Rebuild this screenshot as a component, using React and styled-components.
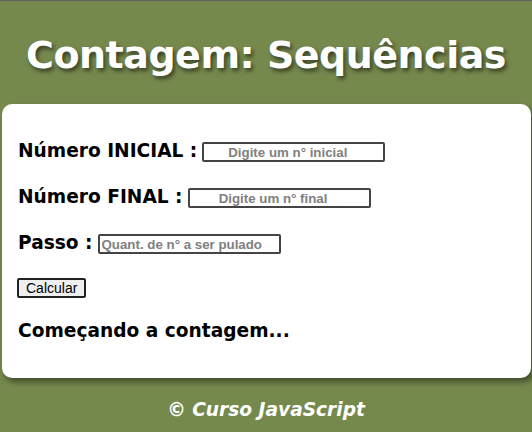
import React from "react";
import styled, { createGlobalStyle } from "styled-components";

const GlobalStyle = createGlobalStyle`
  html, body {
    margin: 0;
    padding: 0;
  }
  body {
    background-color: #76894d;
    border-top: 1px solid #626262;
    font-family: "DejaVu Sans", "Open Sans", sans-serif;
  }
`;

const Header = styled.header`
  height: 103px;
  display: flex;
  align-items: center;
  justify-content: center;
`;

const Title = styled.h1`
  margin: 4px 0 0;
  color: #fff;
  font-size: 38px;
  font-weight: 700;
  letter-spacing: -0.5px;
  text-shadow: 2px 3px 4px rgba(0, 0, 0, 0.55);
`;

const Section = styled.section`
  margin: 0 1px 0 2px;
  background-color: #fff;
  border-radius: 10px;
  box-shadow: 3px 4px 6px rgba(0, 0, 0, 0.45);
  padding: 34px 16px 37px;
  display: flex;
  flex-direction: column;
  gap: 22px;
`;

const Row = styled.div`
  display: flex;
  align-items: center;
  gap: 5px;
`;

const Label = styled.label`
  font-size: 18.6px;
  font-weight: 700;
  color: #000;
`;

const Field = styled.input`
  width: 183px;
  height: 20px;
  box-sizing: border-box;
  border: 2px solid #444;
  border-radius: 2px;
  padding: ${(p) => (p.$center ? "0 14px 0 2px" : "0 2px")};
  font-family: "Liberation Sans", Arial, sans-serif;
  font-size: 13.3px;
  font-weight: 700;
  text-align: ${(p) => (p.$center ? "center" : "left")};
  margin-top: 4px;

  &::placeholder {
    color: #808080;
  }
`;

const Button = styled.button`
  align-self: flex-start;
  margin: 2px 0 0 -1px;
  height: 20px;
  padding: 0 7px;
  border: 2px solid #222;
  border-radius: 2px;
  background-color: #efefef;
  font-family: "Liberation Sans", Arial, sans-serif;
  font-size: 14px;
  color: #000;
`;

const Result = styled.div`
  font-size: 18.6px;
  font-weight: 700;
  color: #000;
`;

const Footer = styled.footer`
  height: 62px;
  display: flex;
  align-items: center;
  justify-content: center;
  color: #fff;
  font-size: 18.6px;
  font-weight: 700;
  font-style: italic;
`;

export default function App() {
  return (
    <>
      <GlobalStyle />
      <Header>
        <Title>Contagem: Sequências</Title>
      </Header>
      <Section>
        <Row>
          <Label htmlFor="inicio">Número INICIAL :</Label>
          <Field id="inicio" $center placeholder="Digite um n° inicial" />
        </Row>
        <Row>
          <Label htmlFor="fim">Número FINAL :</Label>
          <Field id="fim" $center placeholder="Digite um n° final" />
        </Row>
        <Row>
          <Label htmlFor="passo">Passo :</Label>
          <Field id="passo" placeholder="Quant. de n° a ser pulado" />
        </Row>
        <Button>Calcular</Button>
        <Result>Começando a contagem...</Result>
      </Section>
      <Footer>© Curso JavaScript</Footer>
    </>
  );
}
